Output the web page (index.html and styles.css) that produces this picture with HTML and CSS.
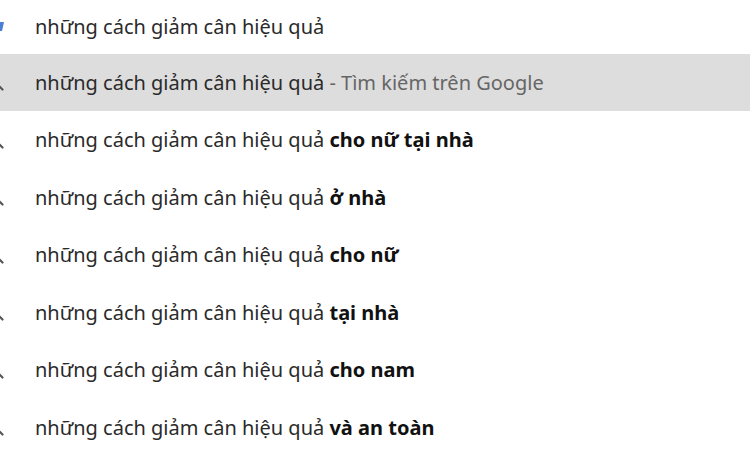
FILE: index.html
```html
<!DOCTYPE html>
<html lang="vi">
<head>
    <meta charset="UTF-8">
    <title>Gợi ý tìm kiếm</title>
    <link rel="stylesheet" href="styles.css">
</head>
<body>
    <ul class="suggestions">
        <li class="suggestion first">
            <span class="icon icon-link"><svg width="24" height="24" viewBox="0 0 24 24"><path d="M6 8h12l-2 9h-10z" fill="#4a7fd8"/></svg></span>
            <span class="text">những cách giảm cân hiệu quả</span>
        </li>
        <li class="suggestion active">
            <span class="icon"><svg width="24" height="24" viewBox="0 0 24 24"><circle cx="9" cy="9" r="6" fill="none" stroke="#555" stroke-width="2"/><path d="M13.5 13.5l6 6" stroke="#555" stroke-width="2.2" stroke-linecap="round"/></svg></span>
            <span class="text">những cách giảm cân hiệu quả <span class="muted">- Tìm kiếm trên Google</span></span>
        </li>
        <li class="suggestion">
            <span class="icon"><svg width="24" height="24" viewBox="0 0 24 24"><circle cx="9" cy="9" r="6" fill="none" stroke="#555" stroke-width="2"/><path d="M13.5 13.5l6 6" stroke="#555" stroke-width="2.2" stroke-linecap="round"/></svg></span>
            <span class="text">những cách giảm cân hiệu quả <b>cho nữ tại nhà</b></span>
        </li>
        <li class="suggestion">
            <span class="icon"><svg width="24" height="24" viewBox="0 0 24 24"><circle cx="9" cy="9" r="6" fill="none" stroke="#555" stroke-width="2"/><path d="M13.5 13.5l6 6" stroke="#555" stroke-width="2.2" stroke-linecap="round"/></svg></span>
            <span class="text">những cách giảm cân hiệu quả <b>ở nhà</b></span>
        </li>
        <li class="suggestion">
            <span class="icon"><svg width="24" height="24" viewBox="0 0 24 24"><circle cx="9" cy="9" r="6" fill="none" stroke="#555" stroke-width="2"/><path d="M13.5 13.5l6 6" stroke="#555" stroke-width="2.2" stroke-linecap="round"/></svg></span>
            <span class="text">những cách giảm cân hiệu quả <b>cho nữ</b></span>
        </li>
        <li class="suggestion">
            <span class="icon"><svg width="24" height="24" viewBox="0 0 24 24"><circle cx="9" cy="9" r="6" fill="none" stroke="#555" stroke-width="2"/><path d="M13.5 13.5l6 6" stroke="#555" stroke-width="2.2" stroke-linecap="round"/></svg></span>
            <span class="text">những cách giảm cân hiệu quả <b>tại nhà</b></span>
        </li>
        <li class="suggestion">
            <span class="icon"><svg width="24" height="24" viewBox="0 0 24 24"><circle cx="9" cy="9" r="6" fill="none" stroke="#555" stroke-width="2"/><path d="M13.5 13.5l6 6" stroke="#555" stroke-width="2.2" stroke-linecap="round"/></svg></span>
            <span class="text">những cách giảm cân hiệu quả <b>cho nam</b></span>
        </li>
        <li class="suggestion">
            <span class="icon"><svg width="24" height="24" viewBox="0 0 24 24"><circle cx="9" cy="9" r="6" fill="none" stroke="#555" stroke-width="2"/><path d="M13.5 13.5l6 6" stroke="#555" stroke-width="2.2" stroke-linecap="round"/></svg></span>
            <span class="text">những cách giảm cân hiệu quả <b>và an toàn</b></span>
        </li>
    </ul>
</body>
</html>
```

FILE: styles.css
```css
body {
    margin: 0;
    background-color: #ffffff;
    font-family: 'Noto Sans', 'Open Sans', sans-serif;
    overflow: hidden;
}
.suggestions {
    list-style: none;
    margin: -4px 0 0 0;
    padding: 0;
}
.suggestion {
    display: flex;
    align-items: center;
    height: 57.5px;
    color: #2a2a2a;
    font-size: 20px;
}
.suggestion.first {
    padding-top: 3px;
    height: 54.5px;
}
.suggestion.active {
    background-color: #dddddd;
}
.icon {
    width: 35px;
    display: flex;
    align-items: center;
    flex-shrink: 0;
}
.icon svg {
    margin-left: -17px;
}
.icon-link svg {
    margin-left: -14px;
}
.text b {
    font-weight: bold;
    color: #111;
}
.muted {
    color: #666;
}
```
